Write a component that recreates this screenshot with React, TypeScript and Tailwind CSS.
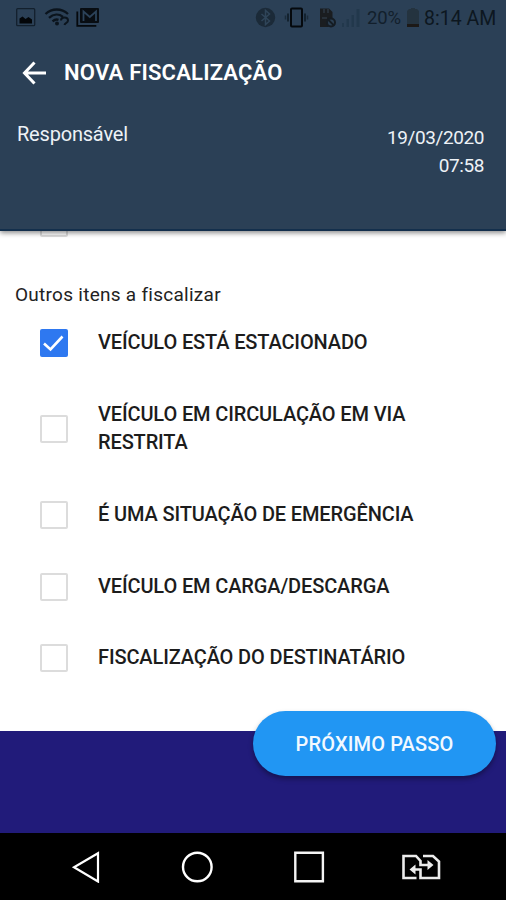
import React from 'react';

// Itens de fiscalização
const items = [
  { lines: ['VEÍCULO ESTÁ ESTACIONADO'], checked: true, row: 'h-[72px]' },
  { lines: ['VEÍCULO EM CIRCULAÇÃO EM VIA', 'RESTRITA'], checked: false, row: 'h-[100px]' },
  { lines: ['É UMA SITUAÇÃO DE EMERGÊNCIA'], checked: false, row: 'h-[72px]' },
  { lines: ['VEÍCULO EM CARGA/DESCARGA'], checked: false, row: 'h-[71px]' },
  { lines: ['FISCALIZAÇÃO DO DESTINATÁRIO'], checked: false, row: 'h-[72px]' },
];

function StatusBar() {
  return (
    <div className="flex h-9 items-center text-[#0b141d]">
      <svg className="ml-4 h-5 w-[84px] shrink-0" viewBox="0 0 84 20" fill="none">
        {/* imagem */}
        <rect x="0.7" y="0.7" width="18" height="17" rx="1" stroke="#13202d" strokeWidth="1.3" />
        <path d="M3.5 15.5v-5l3-2 3 2.500 3-2 3.500 2.500v4z" fill="#030609" />
        {/* wifi */}
        <path d="M29.500 6c6.500-6 16-6 22.500 0M33 9.800c4.500-4 10-4 14-1M36.500 13.300c2-1.700 4-2.200 6-1.500" stroke="#0b141d" strokeWidth="2.300" />
        <circle cx="41" cy="15.500" r="2" fill="#0b141d" />
        <path d="M45 12.500c0-4 7-4 7 0 0 2.500-3 2-3.500 4.500" stroke="#0b141d" strokeWidth="2" />
        {/* gmail */}
        <path d="M61.300 3.500v14.300h19" stroke="#05090d" strokeWidth="1.800" />
        <rect x="64" y="0" width="19" height="15" rx="1" fill="#080d12" />
        <path d="M67.500 13V3.500l6.300 5.500L80 3.500V13" stroke="#2b4259" strokeWidth="1.800" />
      </svg>
      <svg className="ml-[155px] h-6 w-[107px] shrink-0" viewBox="0 0 107 24" fill="none">
        {/* bluetooth */}
        <circle cx="10.500" cy="11.500" r="9.700" fill="#1b2a38" />
        <path d="M6.500 8l8 7-4 3.500v-14l4 3.500-8 7" stroke="#2f4559" strokeWidth="1.500" />
        {/* vibrar */}
        <rect x="36" y="2.500" width="11" height="18" rx="1" stroke="#05090d" strokeWidth="2" />
        <path d="M33 7.500v8M50 7.500v8" stroke="#0d1823" strokeWidth="1.500" />
        <path d="M30.500 9.500v4M52.500 9.500v4" stroke="#1b2b3a" strokeWidth="1.500" />
        {/* sem cartão */}
        <path d="M65 2.500h9l3.500 3.500v6l-4 9H65z" fill="#1a1d20" />
        <path d="M69 3v4M73 3v4M67 12h5" stroke="#354553" strokeWidth="1" />
        <circle cx="76" cy="16.500" r="4" fill="#2b3f52" stroke="#151c23" strokeWidth="2" />
        <path d="M73 13.500l6 6" stroke="#151c23" strokeWidth="1.800" />
        {/* sinal */}
        <path d="M87 17h2v4h-2zM91.500 13h2.500v8h-2.500zM96.500 9h2.500v12h-2.500zM101.500 3h3v18h-3z" fill="#22384c" />
      </svg>
      <span className="mt-px ml-[5px] w-[40px] whitespace-nowrap text-[18.5px] tracking-[-0.2px] text-[#121f2c]">20%</span>
      <svg className="h-6 w-3 shrink-0" viewBox="0 0 12 24">
        <path d="M0 21V5l2-2h2V2h4v1h2l2 2v16z" fill="#24333f" />
        <path d="M0 18h12v3H0z" fill="#1c1917" />
      </svg>
      <span className="mt-0.5 ml-[5px] whitespace-nowrap text-[19.5px] text-[#0d1720]">8:14 AM</span>
    </div>
  );
}

function Checkbox({ checked }: { checked: boolean }) {
  if (!checked) {
    return <span className="h-7 w-7 shrink-0 rounded-[2px] border-2 border-[#dcdcdc] bg-white" />;
  }

  return (
    <span className="h-7 w-7 shrink-0 rounded-[2px] bg-[#2e78f0]">
      <svg className="h-7 w-7" viewBox="0 0 28 28" fill="none">
        <path d="M4 14.500l6.500 6L22.500 7.500" stroke="#fff" strokeWidth="2.600" />
      </svg>
    </span>
  );
}

export default function App() {
  return (
    <div className="flex h-[900px] w-[506px] flex-col overflow-hidden bg-white font-['Roboto',sans-serif]">
      {/* Cabeçalho */}
      <header className="relative z-10 h-[231px] shrink-0 border-b-2 border-[#132f4c] bg-[#2b4056] shadow-[0_2px_5px_rgba(0,0,0,0.45)]">
        <StatusBar />
        <div className="flex h-[72px] items-center pl-[22px] text-white">
          <svg className="mt-0.5 h-6 w-6" viewBox="0 0 24 24" fill="none">
            <path d="M24 12H3M12.500 1.500L2.500 12l10 10.500" stroke="#fff" strokeWidth="3" />
          </svg>
          <h1 className="ml-[18px] text-[22px] font-semibold tracking-[0.2px]">NOVA FISCALIZAÇÃO</h1>
        </div>
        <div className="flex justify-between pr-[22px] pl-[17px] text-[#eef2f6]">
          <p className="mt-3 text-[20px] leading-7 tracking-[-0.2px]">Responsável</p>
          <p className="mt-4 text-right text-[19px] leading-7 tracking-[-0.4px]">
            19/03/2020
            <br />
            07:58
          </p>
        </div>
      </header>

      {/* Lista */}
      <main className="h-[500px] shrink-0">
        <div className="-mt-[22px] ml-10 h-7 w-7 rounded-[2px] border-2 border-[#dcdcdc]" />
        <h2 className="mt-11 ml-[15px] text-[19px] leading-7 tracking-[0.27px] text-[#222]">Outros itens a fiscalizar</h2>
        <div className="-mt-0.5">
          {items.map((item) => (
            <label key={item.lines[0]} className={`flex items-center pl-10 ${item.row}`}>
              <Checkbox checked={item.checked} />
              <span className="-mt-0.5 ml-[30px] text-[20px] leading-7 font-medium tracking-[-0.13px] whitespace-nowrap text-[#1c1c1c]">
                {item.lines.map((line) => (
                  <span key={line} className="block">{line}</span>
                ))}
              </span>
            </label>
          ))}
        </div>
      </main>

      {/* Rodapé */}
      <footer className="flex h-[102px] shrink-0 justify-end bg-[#211b7a] pr-[10px]">
        <button className="relative -mt-[20px] h-[65px] w-[243px] rounded-full bg-[#2196f3] text-[20px] font-medium tracking-[0.15px] text-[#f2f9ff] shadow-[0_3px_5px_rgba(0,0,0,0.35)]">
          PRÓXIMO PASSO
        </button>
      </footer>

      {/* Barra de navegação */}
      <nav className="flex h-[67px] shrink-0 items-center bg-black pl-[71px]">
        <svg className="h-8 w-[30px]" viewBox="0 0 30 32" fill="none" stroke="#fff" strokeWidth="2.200">
          <path d="M27 2.200v28.300L3 16.300z" />
        </svg>
        <svg className="ml-20 h-8 w-8" viewBox="0 0 32 32" fill="none" stroke="#fff" strokeWidth="2.400">
          <circle cx="16.300" cy="16" r="14.300" />
        </svg>
        <svg className="ml-20 h-8 w-8" viewBox="0 0 32 32" fill="none" stroke="#f4f4f4" strokeWidth="2.400">
          <path d="M2.300 1.700h27.600v28.600H2.300z" />
        </svg>
        <svg className="ml-[76px] h-8 w-10" viewBox="0 0 40 32" fill="none" stroke="#ececec" strokeWidth="2.600">
          <path d="M15.500 27H2.500V5H15l4.500 5v4H28" />
          <path d="M22 5h10l6 5.500V27H19.500v-8.500H12" />
          <path d="M26.500 9v10l6-5zM14.500 13.500v10l-6-5z" fill="#ececec" stroke="none" />
        </svg>
      </nav>
    </div>
  );
}
